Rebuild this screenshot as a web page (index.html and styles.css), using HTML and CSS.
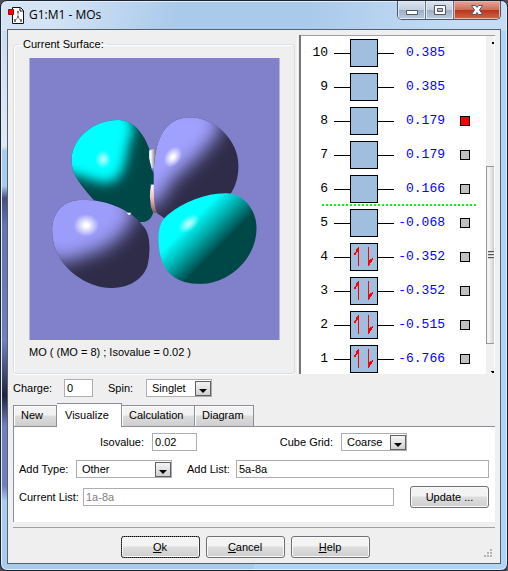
FILE: index.html
```html
<!DOCTYPE html>
<html lang="en">
<head>
<meta charset="utf-8">
<title>G1:M1 - MOs</title>
<link rel="stylesheet" href="styles.css">
</head>
<body>
<svg class="defs" aria-hidden="true">
  <symbol id="spins" viewBox="0 0 26 26">
    <path d="M7.500 3v19M17.500 3v19" stroke="#f00" fill="none"/>
    <path d="M8 3v5H6v1H5v2H3V9h1V8h1V5h1V4h1V3zM17 22v-6h2v-1h2v-1h1v2h-1v2h-1v1h-1v2h-1v1z" fill="#f00"/>
  </symbol>
  <symbol id="drop" viewBox="0 0 16 16">
    <rect x=".5" y=".5" width="15" height="14" fill="url(#face)" stroke="#606060"/>
    <path d="M4 8h8L8 12z" fill="#000"/>
  </symbol>
  <linearGradient id="face" x2="0" y2="1"><stop stop-color="#f6f6f6"/><stop offset="1" stop-color="#cfcfcf"/></linearGradient>
</svg>
<div class="window">
  <header class="titlebar">
    <svg class="app-icon" viewBox="0 0 16 17" aria-hidden="true">
      <path d="M4.500 .5h8l3 3v13h-11z" fill="#fff" stroke="#111"/>
      <path d="M12 1v3h3" fill="none" stroke="#111"/>
      <path d="M10 6v5M10 10l-3 4M10 10l3 4" fill="none" stroke="#888"/>
      <path d="M9 4h2v2H9zM9 9h2v2H9zM6 12h2v3H6zM12 12h2v3h-2z" fill="#777"/>
      <path d="M.5 2.500h5v5h-5z" fill="#f00" stroke="#a00"/>
    </svg>
    <h1>G1:M1 - MOs</h1>
    <div class="caption-buttons">
      <button aria-label="Minimize"><svg viewBox="0 0 14 12"><path d="M1.500 6.500h11v4h-11z" fill="#fff" stroke="#535666"/></svg></button>
      <button aria-label="Maximize"><svg viewBox="0 0 14 12"><path d="M1.500 1.500h11v9h-11zM4.500 4.500v3h5v-3z" fill="#fff" stroke="#535666" fill-rule="evenodd"/></svg></button>
      <button class="close" aria-label="Close"><svg viewBox="0 0 14 12"><path d="M1.500 1.500h4L7 3.500l1.500-2h4L9.500 6l3 4.500h-4L7 8.500l-1.500 2h-4L4.500 6z" fill="#fff" stroke="#535666"/></svg></button>
    </div>
  </header>
  <main class="client">
    <div class="split">
      <fieldset class="surface">
        <legend>Current Surface:</legend>
        <svg class="scene" viewBox="27 24 750 846" role="img" aria-label="Molecular orbital surface">
          <defs>
            <clipPath id="tl"><path d="M153 330C155 260 225 208 295 210C345 213 372 257 386 296V325L392 355L400 370V403H390L388 440L391 470L398 488C392 510 375 518 356 516L225 456C190 415 153 380 153 330z"/></clipPath>
            <clipPath id="tr"><path d="M400 370C402 280 426 202 510 202C584 204 655 270 654 350C653 390 641 415 630 432L434 506L410 490C398 465 400 410 400 370z"/></clipPath>
            <clipPath id="bl"><path d="M95 545C93 478 140 444 200 450C258 451 337 482 365 525C393 550 390 610 380 650C360 700 310 714 270 714C188 712 95 640 95 545z"/></clipPath>
            <filter id="soft" x="-30%" y="-30%" width="160%" height="160%"><feGaussianBlur stdDeviation="17"/></filter>
            <filter id="wide" x="-30%" y="-30%" width="160%" height="160%"><feGaussianBlur stdDeviation="27"/></filter>
            <linearGradient id="br" gradientUnits="userSpaceOnUse" x1="508" y1="520" x2="588" y2="600"><stop stop-color="#00ffff"/><stop offset=".5" stop-color="#00a8a8"/><stop offset="1" stop-color="#004848"/></linearGradient>
            <radialGradient id="shine"><stop offset=".15" stop-color="#fff"/><stop offset="1" stop-color="#fff" stop-opacity="0"/></radialGradient>
            <linearGradient id="white"><stop offset=".3" stop-color="#fff"/><stop offset="1" stop-color="#777"/></linearGradient>
            <linearGradient id="pink" x2="0" y2="1"><stop stop-color="#fff"/><stop offset=".6" stop-color="#e9a9a9"/><stop offset="1" stop-color="#7d5a5a"/></linearGradient>
          </defs>
          <path fill="#8080cb" d="M27 24h750v846H27z"/>
          <path fill="url(#white)" d="M384 305Q390 296 405 297V356L394 355Q390 340 385 325z"/>
          <path fill="url(#pink)" d="M388 425L393 404H412V488H398Q388 465 388 425z"/>
          <g clip-path="url(#tl)">
            <path fill="#004848" d="M140 190h280v340H140z"/>
            <path fill="#0ff" filter="url(#soft)" d="M110 180H315C350 225 338 255 322 290C318 345 298 396 262 398C225 400 195 378 150 372L110 350z"/>
            <ellipse cx="248" cy="328" rx="24" ry="28" fill="url(#shine)" opacity=".65"/>
          </g>
          <g clip-path="url(#tr)">
            <path fill="#2e2c48" d="M390 190h280v330H390z"/>
            <path fill="#a0a0ff" filter="url(#wide)" d="M350 160H575L605 230C570 285 530 325 493 357C462 382 435 410 420 455L350 480z"/>
            <ellipse cx="457" cy="321" rx="34" ry="24" fill="url(#shine)" transform="rotate(-55 457 321)"/>
          </g>
          <g clip-path="url(#bl)">
            <path fill="#2e2c48" d="M80 430h320v300H80z"/>
            <path fill="#9c9cfa" filter="url(#wide)" d="M40 400H300L345 490C320 545 275 590 222 606C185 620 155 630 120 638L40 600z"/>
            <ellipse cx="197" cy="526" rx="38" ry="34" fill="url(#shine)"/>
          </g>
          <path fill="url(#br)" d="M414 570C414 530 422 510 445 492C490 455 560 428 620 430C672 434 708 480 708 535C708 630 620 702 540 702C450 702 416 650 414 570z"/>
          <ellipse cx="505" cy="521" rx="37" ry="22" fill="url(#shine)" opacity=".7" transform="rotate(-38 505 521)"/>
          <path fill="#eee" d="M320 488h12v3h-3v4h-6v-4h-3z"/>
        </svg>
        <p>MO ( (MO = 8) ; Isovalue = 0.02 )</p>
      </fieldset>
      <div class="splitter"></div>
      <section class="levels" aria-label="Orbital energies">
        <ol>
          <li><span class="num">10</span><span class="box"></span><span class="energy">0.385</span></li>
          <li><span class="num">9</span><span class="box"></span><span class="energy">0.385</span></li>
          <li><span class="num">8</span><span class="box"></span><span class="energy">0.179</span><button class="mark on" aria-label="Show 8"></button></li>
          <li><span class="num">7</span><span class="box"></span><span class="energy">0.179</span><button class="mark" aria-label="Show 7"></button></li>
          <li class="lumo"><span class="num">6</span><span class="box"></span><span class="energy">0.166</span><button class="mark" aria-label="Show 6"></button></li>
          <li><span class="num">5</span><span class="box"></span><span class="energy">-0.068</span><button class="mark" aria-label="Show 5"></button></li>
          <li><span class="num">4</span><span class="box"><svg><use href="#spins"/></svg></span><span class="energy">-0.352</span><button class="mark" aria-label="Show 4"></button></li>
          <li><span class="num">3</span><span class="box"><svg><use href="#spins"/></svg></span><span class="energy">-0.352</span><button class="mark" aria-label="Show 3"></button></li>
          <li><span class="num">2</span><span class="box"><svg><use href="#spins"/></svg></span><span class="energy">-0.515</span><button class="mark" aria-label="Show 2"></button></li>
          <li><span class="num">1</span><span class="box"><svg><use href="#spins"/></svg></span><span class="energy">-6.766</span><button class="mark" aria-label="Show 1"></button></li>
        </ol>
        <div class="scroll"><i class="up"></i><div class="thumb"><b></b></div><i class="down"></i></div>
      </section>
    </div>
    <div class="state">
      <label for="charge">Charge:</label><input id="charge" class="w-charge" value="0">
      <label for="spin">Spin:</label><span class="select w-small"><select id="spin"><option>Singlet</option></select><svg><use href="#drop"/></svg></span>
    </div>
    <div class="tabs" role="tablist">
      <button class="w-new" role="tab">New</button><button class="w-vis active" role="tab" aria-selected="true">Visualize</button><button class="w-calc" role="tab">Calculation</button><button class="w-dia" role="tab">Diagram</button>
    </div>
    <section class="panel">
      <div class="row values">
        <label for="iso">Isovalue:</label><input id="iso" class="w-iso" value="0.02">
        <label for="grid" class="push">Cube Grid:</label><span class="select w-small"><select id="grid"><option>Coarse</option></select><svg><use href="#drop"/></svg></span>
      </div>
      <div class="row">
        <label for="type" class="w-type-label">Add Type:</label><span class="select w-type"><select id="type"><option>Other</option></select><svg><use href="#drop"/></svg></span>
        <label for="add" class="w-add-label">Add List:</label><input id="add" class="fill" value="5a-8a">
      </div>
      <div class="row">
        <label for="list" class="w-list-label">Current List:</label><input id="list" class="fill" value="1a-8a" disabled>
        <button class="push-button">Update ...</button>
      </div>
    </section>
    <footer>
      <button class="push-button default"><u>O</u>k</button>
      <button class="push-button"><u>C</u>ancel</button>
      <button class="push-button"><u>H</u>elp</button>
      <svg class="grip" viewBox="0 0 9 9" aria-hidden="true"><path fill="#b4b4b4" d="M6 0h2v2H6zM3 3h2v2H3zM6 3h2v2H6zM0 6h2v2H0zM3 6h2v2H3zM6 6h2v2H6z"/></svg>
    </footer>
  </main>
</div>
</body>
</html>
```
FILE: styles.css
```css
* { box-sizing: border-box; }
body {
  margin: 0;
  background: #4a4d55;
  font: 11px/14px "Liberation Sans", Arial, sans-serif;
  color: #000;
}
button, input, select { font: inherit; color: inherit; }
.defs { position: absolute; width: 0; height: 0; }

.window {
  display: flex;
  flex-direction: column;
  min-height: 100vh;
  padding: 0 6px 6px;
  border: 1px solid #1b2230;
  border-radius: 7px;
  background:
    linear-gradient(100deg, #d5e4f5 10%, #a9caeb 35%, #a9caeb 60%, #c4dcf5 90%) top / 100% 30px no-repeat,
    linear-gradient(90deg, transparent 50%, #b0d4f6 50%),
    linear-gradient(#c8d9ec, #dfeaf7 145px, #a9cbee 150px, #a9cbee 185px, #47507c 197px, #6474b4 225px, #7080bd 340px, #20243c 395px, #7080bd 425px, #7080bd 485px, #a9cbee 500px);
  box-shadow: inset 0 0 0 1px #e2effb;
}
.titlebar {
  display: flex;
  height: 28px;
  padding-left: 1px;
}
.app-icon { width: 16px; height: 17px; margin-top: 6px; }
h1 {
  flex: 1;
  margin: 5px 0 0 5px;
  font: 12px/17px "Open Sans", "Noto Sans", sans-serif;
}
.caption-buttons {
  display: flex;
  height: 19px;
  border: 1px solid #4c5568;
  border-top: 0;
  border-radius: 0 0 5px 5px;
  overflow: hidden;
}
.caption-buttons button {
  display: grid;
  place-items: center;
  width: 28px;
  padding: 0;
  border: 0;
  border-right: 1px solid #66738a;
  background: linear-gradient(#dce4ef, #c2cedf 50%, #9dadc4 50%, #bccbdf);
  box-shadow: inset 0 0 0 1px #e3ebf5;
}
.caption-buttons .close {
  width: 46px;
  border-right: 0;
  background: linear-gradient(#e5a698, #cf6b56 50%, #b8321a 50%, #cf6a4a);
  box-shadow: inset 0 0 0 1px #e8b5a9;
}
.caption-buttons svg { width: 14px; height: 12px; }

.client {
  flex: 1;
  padding: 5px;
  border: 1px solid #55626c;
  background: #efefef;
}
.split { display: flex; height: 339px; }
.surface {
  flex: 1;
  min-width: 0;
  margin: 2px 2px 0 0;
  padding: 7px 14px 0 15px;
  border: 1px solid #d5dfe5;
  border-radius: 3px;
  box-shadow: inset 1px 1px #fff, 0 1px #fff;
}
.surface legend { margin-left: -9px; padding: 0 3px; }
.scene { display: block; width: 100%; height: 282px; }
.surface p { margin: 5px 0 0; }
.splitter {
  width: 4px;
  border: solid #fff;
  border-width: 0 0 0 1px;
  border-right: 2px solid #777;
  background: #e8e8e8;
}
.levels {
  display: flex;
  width: 194px;
  border-top: 1px solid #a0a0a0;
  background: #fff;
  overflow: hidden;
}
ol {
  flex: 1;
  margin: 0;
  padding: 0;
  list-style: none;
  font: 13px/16px "Liberation Mono", monospace;
}
li {
  display: flex;
  align-items: center;
  height: 34px;
  position: relative;
}
.num { width: 27px; text-align: right; }
.box {
  display: grid;
  width: 28px;
  height: 28px;
  margin-left: 22px;
  border: 1px solid #000;
  background: #a0bfdf;
  position: relative;
}
.box::before, .box::after {
  content: "";
  position: absolute;
  top: 13px;
  width: 16px;
  height: 1px;
  background: #000;
}
.box::before { right: 27px; }
.box::after { left: 27px; }
.box svg { width: 26px; height: 26px; }
.energy { width: 67px; text-align: right; color: #00f; }
.mark {
  width: 10px;
  height: 10px;
  margin-left: 15px;
  padding: 0;
  border: 1px solid #000;
  background: #c0c0c0;
}
.mark.on { background: #f00; }
.lumo::after {
  content: "";
  position: absolute;
  left: 21px;
  right: 10px;
  bottom: 0;
  height: 2px;
  background: repeating-linear-gradient(90deg, #0f0 0 2px, #fff 2px 4px);
}
.scroll {
  display: flex;
  flex-direction: column;
  width: 9px;
  border-right: 1px solid #fff;
  background: #f0f0f0;
}
.scroll i { height: 8px; }
.up, .down { align-self: flex-end; width: 3px; }
.up { background: linear-gradient(135deg, transparent 50%, #000 50%) bottom / 3px 3px no-repeat; }
.down { background: linear-gradient(45deg, transparent 50%, #000 50%) bottom / 3px 3px no-repeat; margin-top: auto; }
.thumb {
  display: grid;
  place-items: center end;
  height: 178px;
  margin-top: 122px;
  border: 1px solid #979797;
  border-right: 0;
  background: linear-gradient(90deg, #f4f4f4 30%, #cfcfd2);
}
.thumb b { width: 6px; height: 8px; background: repeating-linear-gradient(#555 0 1px, #ccc 1px 2px, #eee 2px 3px); }

.state { display: flex; align-items: center; height: 28px; }
label { white-space: nowrap; }
input {
  height: 18px;
  min-width: 0;
  padding: 0 2px;
  border: 1px solid #abadb3;
  border-radius: 0;
  background: #fff;
}
input:disabled { color: #808080; }
.select { display: grid; height: 18px; }
.select > * { grid-area: 1 / 1; }
.select select {
  appearance: none;
  width: 100%;
  padding: 0 5px;
  border: 1px solid #abadb3;
  border-radius: 0;
  background: #fff;
}
.select svg {
  width: 16px;
  height: 16px;
  margin: 2px 1px 0 0;
  justify-self: end;
  pointer-events: none;
}
.state label { width: 51px; }
.state label + input + label { width: 38px; margin-left: 15px; }
.w-charge { width: 29px; }
.w-small { width: 66px; }

.tabs {
  display: flex;
  align-items: flex-end;
  height: 24px;
  margin-top: 1px;
  position: relative;
}
.tabs button {
  height: 22px;
  padding: 0 0 2px 7px;
  text-align: left;
  border: 1px solid #8b8e96;
  border-width: 1px 1px 1px 0;
  background: linear-gradient(#f2f2f2 45%, #dcdcdc 50%, #cfcfcf);
  box-shadow: inset 1px 1px #fff;
}
.tabs .w-new { width: 44px; border-left-width: 1px; }
.tabs .w-vis { width: 65px; }
.tabs .w-calc { width: 73px; }
.tabs .w-dia { width: 59px; }
.tabs .active { height: 24px; padding-left: 8px; border-bottom: 0; background: #fff; }
.panel {
  display: flex;
  flex-direction: column;
  gap: 6px;
  min-height: 96px;
  margin-top: -1px;
  padding: 5px 6px 10px 5px;
  border: solid #8b8e96;
  border-width: 1px 0 0 1px;
  background: #fff;
}
.row { display: flex; align-items: center; height: 22px; }
.values { height: 20px; padding: 0 82px 0 81px; }
.values label { margin-right: 8px; }
.w-iso { width: 45px; }
.push { margin-left: auto; }
.w-type-label { width: 57px; }
.w-type { width: 96px; }
.w-add-label { width: 49px; margin-left: 15px; }
.w-list-label { width: 64px; }
.fill { flex: 1; }
.push-button {
  width: 79px;
  height: 22px;
  padding: 0;
  border: 1px solid #707070;
  border-radius: 3px;
  background: linear-gradient(#f3f3f3 45%, #dedede 50%, #cfcfcf);
  box-shadow: inset 0 0 0 1px #fafafa;
}
.row .push-button { margin-left: 16px; }
.push-button.default { outline: 1px dotted #000; outline-offset: -1px; }
footer {
  display: flex;
  justify-content: center;
  gap: 6px;
  margin-top: 5px;
  padding: 8px 18px 0 0;
  border-top: 1px solid #a0a0a0;
  position: relative;
}
.grip { position: absolute; right: 2px; bottom: 0; width: 9px; height: 9px; }
```
